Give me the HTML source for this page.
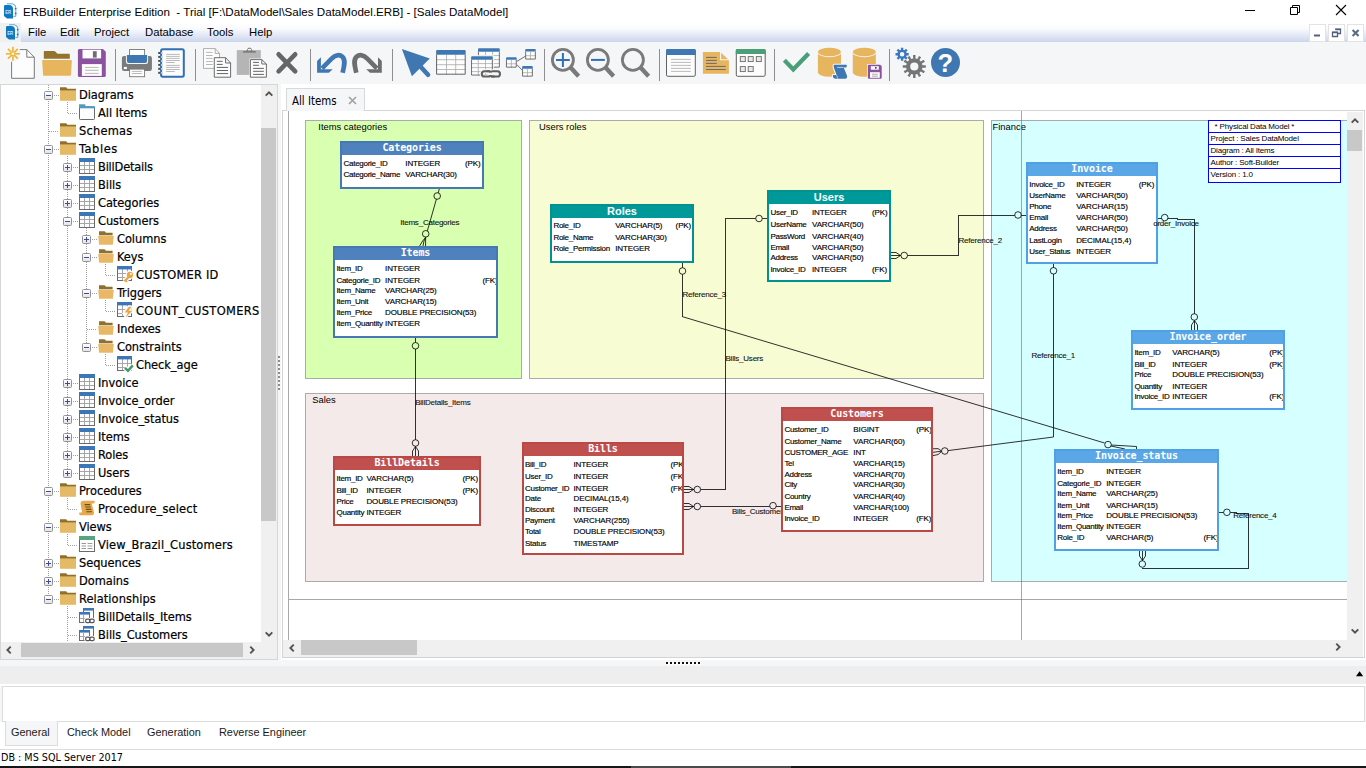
<!DOCTYPE html>
<html lang="en"><head><meta charset="utf-8"><title>ERBuilder Enterprise Edition</title>
<style>
*{box-sizing:border-box}
html,body{margin:0;padding:0}
body{width:1366px;height:768px;overflow:hidden;background:#f5f6f7;position:relative;font-family:"Liberation Sans", sans-serif;color:#000}
.abs{position:absolute}
.t{position:absolute;white-space:pre;line-height:1}
#titlebar{left:0;top:0;width:1366px;height:22px;background:#fff}
#menubar{left:0;top:22px;width:1366px;height:20px;background:linear-gradient(#ffffff 0%,#fbfcfe 30%,#e4e9f6 65%,#ccd5ec 100%)}
#toolbar{left:0;top:43px;width:1366px;height:41px;background:transparent}
.tsep{position:absolute;top:6px;width:1px;height:32px;background:#8e8e8e}
.ticon{position:absolute;top:5px;width:32px;height:32px}
#treepanel{left:0;top:84px;width:278px;height:576px;background:#f0f0f0;border:1px solid #d4d6d8;border-left:none}
#tree{left:0;top:0;width:261px;height:557px;background:#fff;overflow:hidden}
.tr{position:absolute;left:0;height:18px;width:400px}
.tl{position:absolute;top:2px;white-space:pre;font-family:"DejaVu Sans Condensed", "DejaVu Sans", "Liberation Sans", sans-serif;font-size:12.7px;line-height:14px;color:#000;letter-spacing:-0.05px;-webkit-text-stroke:0.2px #000}
.ti{position:absolute;top:0;width:16px;height:16px}
.ex{position:absolute;top:5px;width:9px;height:9px;border:1px solid #919191;border-radius:1.5px;background:linear-gradient(#fff,#e4e4e4)}
.ex i{position:absolute;left:1px;top:3px;width:5px;height:1px;background:#3d4b9c}
.ex b{position:absolute;left:3px;top:1px;width:1px;height:5px;background:#3d4b9c}
.sb{background:#f0f0f0}
.thumb{position:absolute;background:#c8c8c8}
#main{left:282px;top:110px;width:1083px;height:548px;border:1px solid #d4d4d4;background:#fff}
#canvas{left:283px;top:111px;width:1064px;height:529px;background:#fff;overflow:hidden}
#tab{left:286px;top:88px;width:79px;height:23px;background:#f5f6f7;border:1px solid #d9d9d9;border-bottom:none}
#bar{left:0;top:666px;width:1366px;height:18px;background:#eeeeee}
#out{left:2px;top:686px;width:1363px;height:36px;background:#fff;border:1px solid #dcdcdc}
#tabs{left:0;top:722px;width:1366px;height:27px;background:#fff}
#status{left:0;top:749px;width:1366px;height:17px;background:#fff;border-top:1px solid #dcdcdc}
#dark{left:0;top:766px;width:1366px;height:2px;background:#161616}
</style></head>
<body>
<div id="titlebar" class="abs"><div class="abs" style="left:3px;top:3px;width:16px;height:16px"><svg width="16" height="16" viewBox="0 0 16 16" style="overflow:visible;display:block"><path d="M4 0.8h5.5q3.3 0.6 3.3 4v8.5h-2.5" fill="#fff" stroke="#2b8fd0" stroke-width="0.8"/><path d="M1 3.2q0-1.3 1.3-1.3h4.6q3.1 0.6 3.1 4v9.6h-6l-3-2.6z" fill="#0f78c0"/><circle cx="12.6" cy="5.6" r="0.9" fill="#0f78c0"/><circle cx="12.6" cy="10.4" r="0.9" fill="#0f78c0"/><text x="2.2" y="10.6" font-family="Liberation Sans, sans-serif" font-size="4.6" font-weight="bold" fill="#cfe6f6" textLength="6" lengthAdjust="spacingAndGlyphs">ER</text></svg></div><span class="t" style="left:23px;top:5.5px;font-size:11.6px">ERBuilder Enterprise Edition  - Trial [F:\DataModel\Sales DataModel.ERB] - [Sales DataModel]</span><svg class="abs" style="left:1230px;top:0" width="136" height="22" viewBox="0 0 136 22"><path d="M15 10.5h10" stroke="#000" stroke-width="1" fill="none"/><path d="M60.5 7.5h7v7h-7z M62.5 7.5v-2h7v7h-2" stroke="#000" stroke-width="1" fill="none"/><path d="M106 5l10 10M116 5L106 15" stroke="#000" stroke-width="1.1" fill="none"/></svg></div>
<div id="menubar" class="abs"><div class="abs" style="left:0;top:1px;width:21px;height:19px;background:#f0f0f0"></div><div class="abs" style="left:5px;top:2px;width:16px;height:16px"><svg width="16" height="16" viewBox="0 0 16 16" style="overflow:visible;display:block"><path d="M4 0.8h5.5q3.3 0.6 3.3 4v8.5h-2.5" fill="#fff" stroke="#2b8fd0" stroke-width="0.8"/><path d="M1 3.2q0-1.3 1.3-1.3h4.6q3.1 0.6 3.1 4v9.6h-6l-3-2.6z" fill="#0f78c0"/><circle cx="12.6" cy="5.6" r="0.9" fill="#0f78c0"/><circle cx="12.6" cy="10.4" r="0.9" fill="#0f78c0"/><text x="2.2" y="10.6" font-family="Liberation Sans, sans-serif" font-size="4.6" font-weight="bold" fill="#cfe6f6" textLength="6" lengthAdjust="spacingAndGlyphs">ER</text></svg></div><span class="t" style="left:28px;top:5.4px;font-size:11.3px">File</span><span class="t" style="left:60px;top:5.4px;font-size:11.3px">Edit</span><span class="t" style="left:94px;top:5.4px;font-size:11.3px">Project</span><span class="t" style="left:145px;top:5.4px;font-size:11.3px">Database</span><span class="t" style="left:207px;top:5.4px;font-size:11.3px">Tools</span><span class="t" style="left:249px;top:5.4px;font-size:11.3px">Help</span><svg class="abs" style="left:1309px;top:2px" width="17" height="18" viewBox="0 0 17 18"><rect x="0.5" y="0.5" width="16" height="17" fill="#fff" stroke="#e3e3e3"/><path d="M5 11.5h6" stroke="#52607f" stroke-width="2" fill="none"/></svg><svg class="abs" style="left:1328px;top:2px" width="17" height="18" viewBox="0 0 17 18"><rect x="0.5" y="0.5" width="16" height="17" fill="#fff" stroke="#e3e3e3"/><path d="M7.5 5.5h5v4h-2.5M4.5 8.5h5v4h-5z" stroke="#52607f" stroke-width="1.3" fill="none"/><path d="M7 5.2h6M4 8.2h6" stroke="#52607f" stroke-width="1.2"/></svg><svg class="abs" style="left:1347px;top:2px" width="17" height="18" viewBox="0 0 17 18"><rect x="0.5" y="0.5" width="16" height="17" fill="#fff" stroke="#e3e3e3"/><path d="M5.6 6l6 6M11.6 6l-6 6" stroke="#5a6986" stroke-width="2" fill="none"/></svg></div>
<div id="toolbar" class="abs"><div class="tsep" style="left:115px"></div><div class="tsep" style="left:195px"></div><div class="tsep" style="left:310px"></div><div class="tsep" style="left:392px"></div><div class="tsep" style="left:544px"></div><div class="tsep" style="left:659px"></div><div class="tsep" style="left:774px"></div><div class="tsep" style="left:889px"></div><div class="ticon" style="left:5px"><svg width="32" height="32" viewBox="0 0 32 32" style="overflow:visible;display:block"><path d="M6.6 1.6H21.8L29.3 9.2V30.3H6.6z" fill="#fdfdfd" stroke="#6b6b70" stroke-width="0.9" stroke-linejoin="round"/><path d="M21.8 1.6V9.2H29.3" fill="none" stroke="#6b6b70" stroke-width="0.9" stroke-linejoin="round"/><circle cx="7.9" cy="5.8" r="8.3" fill="#f5f6f7"/><path d="M7.9 5.8L7.90 -1.20" stroke="#f0b53c" stroke-width="1.7" stroke-linecap="butt"/><path d="M7.9 5.8L7.90 12.80" stroke="#f0b53c" stroke-width="1.7" stroke-linecap="butt"/><path d="M7.9 5.8L0.90 5.80" stroke="#f0b53c" stroke-width="1.7" stroke-linecap="butt"/><path d="M7.9 5.8L14.90 5.80" stroke="#f0b53c" stroke-width="1.7" stroke-linecap="butt"/><path d="M7.9 5.8L3.00 0.90" stroke="#f0b53c" stroke-width="1.7" stroke-linecap="butt"/><path d="M7.9 5.8L12.80 10.70" stroke="#f0b53c" stroke-width="1.7" stroke-linecap="butt"/><path d="M7.9 5.8L12.80 0.90" stroke="#f0b53c" stroke-width="1.7" stroke-linecap="butt"/><path d="M7.9 5.8L3.00 10.70" stroke="#f0b53c" stroke-width="1.7" stroke-linecap="butt"/><circle cx="7.9" cy="5.8" r="1.3" fill="#f5f6f7"/></svg></div><div class="ticon" style="left:41px"><svg width="32" height="32" viewBox="0 0 32 32" style="overflow:visible;display:block"><path d="M2.8 3.6q0-0.7 0.7-0.7h9.4q0.6 0 1 0.4l2.6 2.5h11.6q0.7 0 0.7 0.7v4.3h-26z" fill="#94742c"/><path d="M1.8 12.1h28.4q0.7 0 0.65 0.7l-0.9 14.2q-0.05 0.7-0.75 0.7H2.8q-0.7 0-0.75-0.7l-0.9-14.2q-0.05-0.7 0.65-0.7z" fill="#e8b55f"/></svg></div><div class="ticon" style="left:77px"><svg width="32" height="32" viewBox="0 0 32 32" style="overflow:visible;display:block"><path d="M2.4 1h23.5l2.9 2.8v23.6q0 1.5-1.5 1.5H2.4q-1.5 0-1.5-1.5V2.5q0-1.5 1.5-1.5z" fill="#8b52a0"/><rect x="5.5" y="1.7" width="18.6" height="8.7" fill="#fdfdfd"/><rect x="15.9" y="3.2" width="3.8" height="6.4" fill="#6e6e72"/><rect x="4.9" y="16.1" width="19.9" height="11.8" fill="#fdfdfd"/><path d="M8 19.4h13.75M8 22.3h13.75M8 25.4h13.75" stroke="#a6a6a6" stroke-width="0.8"/></svg></div><div class="ticon" style="left:121px"><svg width="32" height="32" viewBox="0 0 32 32" style="overflow:visible;display:block"><rect x="8.6" y="1.5" width="15" height="7" fill="#fdfdfd" stroke="#777" stroke-width="0.9"/><rect x="0.9" y="7.9" width="30" height="15" rx="2.2" fill="#7a7a7a"/><path d="M4.9 7.9h22.2v5.8q0 2.2-2.2 2.2H7.1q-2.2 0-2.2-2.2z" fill="#f5f6f7"/><path d="M5.9 7.1h20.2v5.9q0 2-2 2H7.9q-2 0-2-2z" fill="#3f77b3"/><rect x="2.8" y="18.9" width="3.1" height="2.2" fill="#fdfdfd"/><rect x="8.6" y="21.1" width="15" height="7.6" fill="#fdfdfd" stroke="#777" stroke-width="0.9"/><path d="M10.9 23.4h10M10.9 25.5h10" stroke="#a6a6a6" stroke-width="0.8"/></svg></div><div class="ticon" style="left:157px"><svg width="32" height="32" viewBox="0 0 32 32" style="overflow:visible;display:block"><rect x="4.1" y="1.2" width="22.7" height="27.5" rx="1.6" fill="#fdfdfd" stroke="#2f6fb5" stroke-width="2"/><rect x="1.2" y="4.0" width="2.2" height="2" fill="#4d4d4d"/><circle cx="4.9" cy="5.0" r="1.1" fill="#cfcfcf"/><rect x="1.2" y="7.9" width="2.2" height="2" fill="#4d4d4d"/><circle cx="4.9" cy="8.9" r="1.1" fill="#cfcfcf"/><rect x="1.2" y="11.9" width="2.2" height="2" fill="#4d4d4d"/><circle cx="4.9" cy="12.9" r="1.1" fill="#cfcfcf"/><rect x="1.2" y="15.9" width="2.2" height="2" fill="#4d4d4d"/><circle cx="4.9" cy="16.9" r="1.1" fill="#cfcfcf"/><rect x="1.2" y="19.8" width="2.2" height="2" fill="#4d4d4d"/><circle cx="4.9" cy="20.8" r="1.1" fill="#cfcfcf"/><rect x="1.2" y="23.8" width="2.2" height="2" fill="#4d4d4d"/><circle cx="4.9" cy="24.8" r="1.1" fill="#cfcfcf"/><path d="M9.1 6.4h13.7M9.1 8.4h13.7M9.1 10.4h13.7M9.1 12.5h13.7M9.1 14.5h8.7M9.1 17.4h13.7M9.1 19.4h13.7M9.1 21.5h13.7M9.1 23.5h8.7" stroke="#a3a3a3" stroke-width="0.75"/></svg></div><div class="ticon" style="left:201px"><svg width="32" height="32" viewBox="0 0 32 32" style="overflow:visible;display:block"><path d="M2.5 0.6H14.2L18.5 5.4V20.4H2.5z" fill="#fdfdfd" stroke="#9a9a9a" stroke-width="0.8"/><path d="M14.2 0.6V5.4H18.5" fill="none" stroke="#9a9a9a" stroke-width="0.8"/><path d="M5 4.4h6.7M5 7.5h6.7M5 10.4h6.7M5 13.5h6.7M5 16.5h6.7" stroke="#a6a6a6" stroke-width="0.8"/><path d="M13.3 9.7H24.6L29.6 15V29.2H13.3z" fill="#fdfdfd" stroke="#5c5c5c" stroke-width="0.9"/><path d="M24.6 9.7V15H29.6" fill="none" stroke="#5c5c5c" stroke-width="0.9"/><path d="M15.8 13.3h5.9M15.8 16.4h5.9M15.8 19.4h11.3M15.8 22.5h11.3M15.8 25.6h11.3" stroke="#5c5c5c" stroke-width="0.95"/></svg></div><div class="ticon" style="left:237px"><svg width="32" height="32" viewBox="0 0 32 32" style="overflow:visible;display:block"><rect x="-0.2" y="2.1" width="24" height="24.8" fill="#b5b5b5"/><path d="M6.1 4.8V3.6q0-0.7 0.7-0.7h2.6l0.9-2q0.6-1.5 2.2-1.5t2.2 1.5l0.9 2h2.5q0.7 0 0.7 0.7v1.2z" fill="#7d7d7d"/><ellipse cx="12.5" cy="1.6" rx="1.9" ry="0.9" fill="#f5f6f7"/><path d="M12.4 10.6H25.3L30.4 15.6V30.2H12.4z" fill="#f5f6f7"/><path d="M13.4 11.6H24.8L29.4 16V29.2H13.4z" fill="#fdfdfd" stroke="#5c5c5c" stroke-width="0.9"/><path d="M24.8 11.6V16H29.4" fill="none" stroke="#5c5c5c" stroke-width="0.9"/><path d="M16.1 14.4h5.8M16.1 17.3h5.8M16.1 20.4h10.8M16.1 23.3h10.8M16.1 26.4h10.8" stroke="#5c5c5c" stroke-width="0.95"/></svg></div><div class="ticon" style="left:273px"><svg width="32" height="32" viewBox="0 0 32 32" style="overflow:visible;display:block"><path d="M5.6 6.3L22.2 23.3M22.2 6.3L5.6 23.3" stroke="#666" stroke-width="4.6" stroke-linecap="round" fill="none"/></svg></div><div class="ticon" style="left:317px"><svg width="32" height="32" viewBox="0 0 32 32" style="overflow:visible;display:block"><path d="M5 20.3L14.6 10.6C18.5 6.6 22.6 6.2 25.4 8.8C28.8 12 27.4 17.5 25.6 24.75" fill="none" stroke="#3f77b3" stroke-width="4.6"/><path d="M0.1 12.9L3.9 9.2V21.2H15.7L11.9 24.75H0.1z" fill="#3f77b3"/></svg></div><div class="ticon" style="left:353px"><svg width="32" height="32" viewBox="0 0 32 32" style="overflow:visible;display:block"><g transform="translate(28.9 0) scale(-1 1)"><path d="M5 20.3L14.6 10.6C18.5 6.6 22.6 6.2 25.4 8.8C28.8 12 27.4 17.5 25.6 24.75" fill="none" stroke="#6e6e6e" stroke-width="4.6"/><path d="M0.1 12.9L3.9 9.2V21.2H15.7L11.9 24.75H0.1z" fill="#6e6e6e"/></g></svg></div><div class="ticon" style="left:397px"><svg width="32" height="32" viewBox="0 0 32 32" style="overflow:visible;display:block"><path d="M4.9 1L32.8 10.4L14.9 28.3z" fill="#3f77b3"/><path d="M22.5 17.5L31 26.7" stroke="#3f77b3" stroke-width="4.6" stroke-linecap="round"/></svg></div><div class="ticon" style="left:433px"><svg width="32" height="32" viewBox="0 0 32 32" style="overflow:visible;display:block"><rect x="3.10" y="2.10" width="29.60" height="24.60" fill="#fdfdfd"/><path d="M13.50 6.80V26.70" stroke="#a9a9a9" stroke-width="0.8"/><path d="M22.70 6.80V26.70" stroke="#a9a9a9" stroke-width="0.8"/><path d="M3.10 11.70H32.70" stroke="#a9a9a9" stroke-width="0.8"/><path d="M3.10 16.70H32.70" stroke="#a9a9a9" stroke-width="0.8"/><path d="M3.10 21.50H32.70" stroke="#a9a9a9" stroke-width="0.8"/><path d="M3.60 6.80V26.20H32.20V6.80" fill="none" stroke="#606060" stroke-width="1.00"/><path d="M3.10 6.80v-3.70q0-1.00 1-1.00h27.60q1 0 1 1v3.70z" fill="#3f77b3"/></svg></div><div class="ticon" style="left:469px"><svg width="32" height="32" viewBox="0 0 32 32" style="overflow:visible;display:block"><rect x="9.00" y="0.20" width="21.80" height="19.40" fill="#fdfdfd"/><path d="M16.50 3.80V19.60" stroke="#a9a9a9" stroke-width="0.8"/><path d="M23.60 3.80V19.60" stroke="#a9a9a9" stroke-width="0.8"/><path d="M9.00 7.60H30.80" stroke="#a9a9a9" stroke-width="0.8"/><path d="M9.00 11.60H30.80" stroke="#a9a9a9" stroke-width="0.8"/><path d="M9.00 15.60H30.80" stroke="#a9a9a9" stroke-width="0.8"/><path d="M9.45 3.80V19.15H30.35V3.80" fill="none" stroke="#606060" stroke-width="0.90"/><path d="M9.00 3.80v-2.60q0-1.00 1-1.00h19.80q1 0 1 1v2.60z" fill="#3f77b3"/><rect x="1.10" y="7.20" width="23.70" height="21.30" fill="#f5f6f7"/><rect x="2.10" y="8.20" width="21.70" height="19.30" fill="#fdfdfd"/><path d="M9.30 11.80V27.50" stroke="#a9a9a9" stroke-width="0.8"/><path d="M16.50 11.80V27.50" stroke="#a9a9a9" stroke-width="0.8"/><path d="M2.10 15.60H23.80" stroke="#a9a9a9" stroke-width="0.8"/><path d="M2.10 19.60H23.80" stroke="#a9a9a9" stroke-width="0.8"/><path d="M2.10 23.60H23.80" stroke="#a9a9a9" stroke-width="0.8"/><path d="M2.55 11.80V27.05H23.35V11.80" fill="none" stroke="#606060" stroke-width="0.90"/><path d="M2.10 11.80v-2.60q0-1.00 1-1.00h19.70q1 0 1 1v2.60z" fill="#3f77b3"/><g fill="none" stroke="#f5f6f7" stroke-width="4"><rect x="12.8" y="23.2" width="9" height="5.3" rx="2.6"/><rect x="21.4" y="23.2" width="9.6" height="5.3" rx="2.6"/></g><g fill="none" stroke="#606060" stroke-width="2"><rect x="12.8" y="23.2" width="9" height="5.3" rx="2.6"/><rect x="21.4" y="23.2" width="9.6" height="5.3" rx="2.6"/></g><path d="M18.5 25.85h6.5" stroke="#f5f6f7" stroke-width="2.4"/><path d="M17.5 23.2h4M22 28.5h4" stroke="#606060" stroke-width="2" fill="none"/></svg></div><div class="ticon" style="left:505px"><svg width="32" height="32" viewBox="0 0 32 32" style="overflow:visible;display:block"><path d="M11.7 13.5L20.2 8.3M11.7 16.5L17.1 22" stroke="#606060" stroke-width="0.9"/><rect x="1.00" y="9.20" width="10.70" height="10.40" fill="#fdfdfd"/><path d="M6.35 11.80V19.60" stroke="#a9a9a9" stroke-width="0.8"/><path d="M1.00 15.80H11.70" stroke="#a9a9a9" stroke-width="0.8"/><path d="M1.45 11.80V19.15H11.25V11.80" fill="none" stroke="#606060" stroke-width="0.90"/><path d="M1.00 11.80v-1.60q0-1.00 1-1.00h8.70q1 0 1 1v1.60z" fill="#3f77b3"/><rect x="20.20" y="1.00" width="10.60" height="10.50" fill="#fdfdfd"/><path d="M25.50 3.60V11.50" stroke="#a9a9a9" stroke-width="0.8"/><path d="M20.20 7.70H30.80" stroke="#a9a9a9" stroke-width="0.8"/><path d="M20.65 3.60V11.05H30.35V3.60" fill="none" stroke="#606060" stroke-width="0.90"/><path d="M20.20 3.60v-1.60q0-1.00 1-1.00h8.60q1 0 1 1v1.60z" fill="#3f77b3"/><rect x="17.10" y="18.10" width="10.70" height="10.50" fill="#fdfdfd"/><path d="M22.45 20.70V28.60" stroke="#a9a9a9" stroke-width="0.8"/><path d="M17.10 24.70H27.80" stroke="#a9a9a9" stroke-width="0.8"/><path d="M17.55 20.70V28.15H27.35V20.70" fill="none" stroke="#606060" stroke-width="0.90"/><path d="M17.10 20.70v-1.60q0-1.00 1-1.00h8.70q1 0 1 1v1.60z" fill="#3f77b3"/></svg></div><div class="ticon" style="left:549px"><svg width="32" height="32" viewBox="0 0 32 32" style="overflow:visible;display:block"><circle cx="13.9" cy="11.9" r="10.5" fill="none" stroke="#7a7a7a" stroke-width="2.8"/><path d="M21.6 19.6L29.6 28.2" stroke="#7a7a7a" stroke-width="4.4"/><path d="M7 11.9h13.8M13.9 5v13.9" stroke="#2f6fb5" stroke-width="2"/></svg></div><div class="ticon" style="left:584px"><svg width="32" height="32" viewBox="0 0 32 32" style="overflow:visible;display:block"><circle cx="13.9" cy="11.9" r="10.5" fill="none" stroke="#7a7a7a" stroke-width="2.8"/><path d="M21.6 19.6L29.6 28.2" stroke="#7a7a7a" stroke-width="4.4"/><path d="M7 11.9h13.8" stroke="#2f6fb5" stroke-width="2"/></svg></div><div class="ticon" style="left:619px"><svg width="32" height="32" viewBox="0 0 32 32" style="overflow:visible;display:block"><circle cx="13.9" cy="11.9" r="10.5" fill="none" stroke="#7a7a7a" stroke-width="2.8"/><path d="M21.6 19.6L29.6 28.2" stroke="#7a7a7a" stroke-width="4.4"/></svg></div><div class="ticon" style="left:665px"><svg width="32" height="32" viewBox="0 0 32 32" style="overflow:visible;display:block"><rect x="1.5" y="1.5" width="28.8" height="26.8" rx="1.4" fill="#fdfdfd" stroke="#606060" stroke-width="1"/><path d="M1 6.9V2.4q0-1.4 1.4-1.4h27q1.4 0 1.4 1.4v4.5z" fill="#3f77b3"/><path d="M6 11.4h19.8M6 14.4h19.8M6 17.4h19.8M6 20.4h19.8M6 23.4h19.8" stroke="#a9a9a9" stroke-width="0.8"/></svg></div><div class="ticon" style="left:701px"><svg width="32" height="32" viewBox="0 0 32 32" style="overflow:visible;display:block"><path d="M1.9 3.9H19.2L27.9 12.1V25.8H1.9z" fill="#e8b55f"/><path d="M19.6 3.2V11.7H28.4" fill="none" stroke="#f5f6f7" stroke-width="1.1"/><path d="M5 9.4h10.8M5 12.4h10.8M5 15.4h10.8M5 18.4h19.8M5 21.5h19.8" stroke="#6a6a6a" stroke-width="1"/></svg></div><div class="ticon" style="left:737px"><svg width="32" height="32" viewBox="0 0 32 32" style="overflow:visible;display:block"><rect x="-0.7" y="1.5" width="28.9" height="26.8" rx="1.4" fill="#fdfdfd" stroke="#606060" stroke-width="1"/><path d="M-1.2 5.9V2.4q0-1.4 1.4-1.4h27.1q1.4 0 1.4 1.4v3.5z" fill="#4a9f78"/><rect x="3.3" y="8.6" width="5" height="5" fill="#e9e9e9" stroke="#6a6a6a" stroke-width="0.9"/><rect x="11.2" y="8.6" width="5" height="5" fill="#e9e9e9" stroke="#6a6a6a" stroke-width="0.9"/><rect x="19.3" y="8.6" width="5" height="5" fill="#e9e9e9" stroke="#6a6a6a" stroke-width="0.9"/><rect x="3.3" y="18.6" width="5" height="5" fill="#e9e9e9" stroke="#6a6a6a" stroke-width="0.9"/><rect x="11.2" y="18.6" width="5" height="5" fill="#e9e9e9" stroke="#6a6a6a" stroke-width="0.9"/></svg></div><div class="ticon" style="left:781px"><svg width="32" height="32" viewBox="0 0 32 32" style="overflow:visible;display:block"><path d="M3.4 12.3L12.3 21.5L27.6 5.6" fill="none" stroke="#4a9f78" stroke-width="4.3"/></svg></div><div class="ticon" style="left:817px"><svg width="32" height="32" viewBox="0 0 32 32" style="overflow:visible;display:block"><path d="M0.90 4V24.6a11.55 4.2 0 0 0 23.1 0V4z" fill="#e8b55f"/><ellipse cx="12.45" cy="4.6" rx="11.9" ry="4.6" fill="#f5f6f7"/><ellipse cx="12.45" cy="4" rx="11.55" ry="4.2" fill="#e8b55f"/><path d="M17.3 16.8H29Q30.3 16.9 29.8 18L29.3 19.4H26.7L30 27.8Q30.6 30.6 28 30.8H18.8Q16 30.6 15.9 28L16.1 27.1H19.6L17 20Q16.2 17 17.3 16.8Z" fill="#f5f6f7" stroke="#f5f6f7" stroke-width="2.2" stroke-linejoin="round"/><path d="M17.3 16.8H29Q30.3 16.9 29.8 18L29.3 19.4H26.7L30 27.8Q30.6 30.6 28 30.8H18.8Q16 30.6 15.9 28L16.1 27.1H19.6L17 20Q16.2 17 17.3 16.8Z" fill="#3f77b3"/><path d="M20.2 19.4H26.7" stroke="#f5f6f7" stroke-width="0.7"/><path d="M19.6 27.1L20.8 30.6" stroke="#f5f6f7" stroke-width="0.6"/></svg></div><div class="ticon" style="left:853px"><svg width="32" height="32" viewBox="0 0 32 32" style="overflow:visible;display:block"><path d="M-0.25 4V24.6a11.55 4.2 0 0 0 23.1 0V4z" fill="#e8b55f"/><ellipse cx="11.30" cy="4.6" rx="11.9" ry="4.6" fill="#f5f6f7"/><ellipse cx="11.30" cy="4" rx="11.55" ry="4.2" fill="#e8b55f"/><rect x="14.1" y="16" width="15.4" height="15.6" fill="#f5f6f7"/><path d="M15.9 16.8h11.3l1.5 1.5v11.5q0 1-1 1H15.9q-1 0-1-1V17.8q0-1 1-1z" fill="#8b52a0"/><rect x="17.8" y="18.2" width="8" height="3.5" fill="#fdfdfd"/><rect x="22" y="19" width="1.6" height="1.7" fill="#444"/><rect x="17" y="24.2" width="9.8" height="5.6" fill="#fdfdfd"/><path d="M19 26.25h5.8M19 28.2h5.8" stroke="#8a8a8a" stroke-width="0.7"/></svg></div><div class="ticon" style="left:897px"><svg width="32" height="32" viewBox="0 0 32 32" style="overflow:visible;display:block"><path d="M25.42 17.32L28.83 17.25L28.83 19.75L25.42 19.68L24.92 21.54L27.91 23.18L26.66 25.35L23.74 23.58L22.38 24.94L24.15 27.86L21.98 29.11L20.34 26.12L18.48 26.62L18.55 30.03L16.05 30.03L16.12 26.62L14.26 26.12L12.62 29.11L10.45 27.86L12.22 24.94L10.86 23.58L7.94 25.35L6.69 23.18L9.68 21.54L9.18 19.68L5.77 19.75L5.77 17.25L9.18 17.32L9.68 15.46L6.69 13.82L7.94 11.65L10.86 13.42L12.22 12.06L10.45 9.14L12.62 7.89L14.26 10.88L16.12 10.38L16.05 6.97L18.55 6.97L18.48 10.38L20.34 10.88L21.98 7.89L24.15 9.14L22.38 12.06L23.74 13.42L26.66 11.65L27.91 13.82L24.92 15.46zM13.20 18.50a4.10 4.10 0 1 0 8.20 0a4.10 4.10 0 1 0 -8.20 0z" fill="#757575" fill-rule="evenodd"/><path d="M9.66 5.12L11.69 5.03L11.69 7.47L9.66 7.38L9.13 8.67L10.62 10.05L8.90 11.77L7.52 10.28L6.23 10.81L6.32 12.84L3.88 12.84L3.97 10.81L2.68 10.28L1.30 11.77L-0.42 10.05L1.07 8.67L0.54 7.38L-1.49 7.47L-1.49 5.03L0.54 5.12L1.07 3.83L-0.42 2.45L1.30 0.73L2.68 2.22L3.97 1.69L3.88 -0.34L6.32 -0.34L6.23 1.69L7.52 2.22L8.90 0.73L10.62 2.45L9.13 3.83zM2.80 6.25a2.30 2.30 0 1 0 4.60 0a2.30 2.30 0 1 0 -4.60 0z" fill="#3b78bd" fill-rule="evenodd"/></svg></div><div class="ticon" style="left:933px"><svg width="32" height="32" viewBox="0 0 32 32" style="overflow:visible;display:block"><circle cx="12.5" cy="14.4" r="14.5" fill="#3f77b3"/><text x="12.4" y="24" text-anchor="middle" font-family="Liberation Sans, sans-serif" font-weight="bold" font-size="25.5" fill="#fff">?</text></svg></div></div>
<div id="treepanel" class="abs"><div id="tree" class="abs"><svg class="abs" style="left:0;top:0" width="261" height="557" viewBox="0 0 261 557" shape-rendering="crispEdges"><path d="M54 10.5 H59" stroke="#a0a0a0" stroke-width="1" stroke-dasharray="1 1" fill="none"/><path d="M68 28.5 H78" stroke="#a0a0a0" stroke-width="1" stroke-dasharray="1 1" fill="none"/><path d="M49 46.5 H59" stroke="#a0a0a0" stroke-width="1" stroke-dasharray="1 1" fill="none"/><path d="M54 64.5 H59" stroke="#a0a0a0" stroke-width="1" stroke-dasharray="1 1" fill="none"/><path d="M73 82.5 H78" stroke="#a0a0a0" stroke-width="1" stroke-dasharray="1 1" fill="none"/><path d="M73 100.5 H78" stroke="#a0a0a0" stroke-width="1" stroke-dasharray="1 1" fill="none"/><path d="M73 118.5 H78" stroke="#a0a0a0" stroke-width="1" stroke-dasharray="1 1" fill="none"/><path d="M73 136.5 H78" stroke="#a0a0a0" stroke-width="1" stroke-dasharray="1 1" fill="none"/><path d="M92 154.5 H97" stroke="#a0a0a0" stroke-width="1" stroke-dasharray="1 1" fill="none"/><path d="M92 172.5 H97" stroke="#a0a0a0" stroke-width="1" stroke-dasharray="1 1" fill="none"/><path d="M106 190.5 H116" stroke="#a0a0a0" stroke-width="1" stroke-dasharray="1 1" fill="none"/><path d="M92 208.5 H97" stroke="#a0a0a0" stroke-width="1" stroke-dasharray="1 1" fill="none"/><path d="M106 226.5 H116" stroke="#a0a0a0" stroke-width="1" stroke-dasharray="1 1" fill="none"/><path d="M87 244.5 H97" stroke="#a0a0a0" stroke-width="1" stroke-dasharray="1 1" fill="none"/><path d="M92 262.5 H97" stroke="#a0a0a0" stroke-width="1" stroke-dasharray="1 1" fill="none"/><path d="M106 280.5 H116" stroke="#a0a0a0" stroke-width="1" stroke-dasharray="1 1" fill="none"/><path d="M73 298.5 H78" stroke="#a0a0a0" stroke-width="1" stroke-dasharray="1 1" fill="none"/><path d="M73 316.5 H78" stroke="#a0a0a0" stroke-width="1" stroke-dasharray="1 1" fill="none"/><path d="M73 334.5 H78" stroke="#a0a0a0" stroke-width="1" stroke-dasharray="1 1" fill="none"/><path d="M73 352.5 H78" stroke="#a0a0a0" stroke-width="1" stroke-dasharray="1 1" fill="none"/><path d="M73 370.5 H78" stroke="#a0a0a0" stroke-width="1" stroke-dasharray="1 1" fill="none"/><path d="M73 388.5 H78" stroke="#a0a0a0" stroke-width="1" stroke-dasharray="1 1" fill="none"/><path d="M54 406.5 H59" stroke="#a0a0a0" stroke-width="1" stroke-dasharray="1 1" fill="none"/><path d="M68 424.5 H78" stroke="#a0a0a0" stroke-width="1" stroke-dasharray="1 1" fill="none"/><path d="M54 442.5 H59" stroke="#a0a0a0" stroke-width="1" stroke-dasharray="1 1" fill="none"/><path d="M68 460.5 H78" stroke="#a0a0a0" stroke-width="1" stroke-dasharray="1 1" fill="none"/><path d="M54 478.5 H59" stroke="#a0a0a0" stroke-width="1" stroke-dasharray="1 1" fill="none"/><path d="M54 496.5 H59" stroke="#a0a0a0" stroke-width="1" stroke-dasharray="1 1" fill="none"/><path d="M54 514.5 H59" stroke="#a0a0a0" stroke-width="1" stroke-dasharray="1 1" fill="none"/><path d="M68 532.5 H78" stroke="#a0a0a0" stroke-width="1" stroke-dasharray="1 1" fill="none"/><path d="M68 550.5 H78" stroke="#a0a0a0" stroke-width="1" stroke-dasharray="1 1" fill="none"/><path d="M68 568.5 H78" stroke="#a0a0a0" stroke-width="1" stroke-dasharray="1 1" fill="none"/><path d="M48.5 0 V510" stroke="#a0a0a0" stroke-width="1" stroke-dasharray="1 1" fill="none"/><path d="M67.5 17 V28" stroke="#a0a0a0" stroke-width="1" stroke-dasharray="1 1" fill="none"/><path d="M67.5 71 V388" stroke="#a0a0a0" stroke-width="1" stroke-dasharray="1 1" fill="none"/><path d="M86.5 143 V262" stroke="#a0a0a0" stroke-width="1" stroke-dasharray="1 1" fill="none"/><path d="M105.5 179 V190" stroke="#a0a0a0" stroke-width="1" stroke-dasharray="1 1" fill="none"/><path d="M105.5 215 V226" stroke="#a0a0a0" stroke-width="1" stroke-dasharray="1 1" fill="none"/><path d="M105.5 269 V280" stroke="#a0a0a0" stroke-width="1" stroke-dasharray="1 1" fill="none"/><path d="M67.5 413 V424" stroke="#a0a0a0" stroke-width="1" stroke-dasharray="1 1" fill="none"/><path d="M67.5 449 V460" stroke="#a0a0a0" stroke-width="1" stroke-dasharray="1 1" fill="none"/><path d="M67.5 521 V557" stroke="#a0a0a0" stroke-width="1" stroke-dasharray="1 1" fill="none"/></svg><div class="tr" style="top:1px"><span class="ex" style="left:44px"><i></i></span><span class="ti" style="left:60px"><svg width="16" height="16" viewBox="0 0 16 16" style="overflow:visible;display:block"><path d="M0 1.2h6.2l1.2 1.5h8.6v2.3h-16z" fill="#8f702c"/><rect x="0" y="4.4" width="16" height="10.4" fill="#e4ba66"/></svg></span><span class="tl" style="left:79px">Diagrams</span></div><div class="tr" style="top:19px"><span class="ti" style="left:79px"><svg width="16" height="16" viewBox="0 0 16 16" style="overflow:visible;display:block"><path d="M0 0.3h6.3v2.3h-6.3z" fill="#4a9cc4"/><rect x="0.5" y="2.8" width="15" height="12.7" rx="0.8" fill="#fdfdfd" stroke="#6b6b6b" stroke-width="1"/><path d="M0 2.3h16v2h-16z" fill="#4a9cc4"/></svg></span><span class="tl" style="left:98px">All Items</span></div><div class="tr" style="top:37px"><span class="ti" style="left:60px"><svg width="16" height="16" viewBox="0 0 16 16" style="overflow:visible;display:block"><path d="M0 1.2h6.2l1.2 1.5h8.6v2.3h-16z" fill="#8f702c"/><rect x="0" y="4.4" width="16" height="10.4" fill="#e4ba66"/></svg></span><span class="tl" style="left:79px;letter-spacing:0.22px">Schemas</span></div><div class="tr" style="top:55px"><span class="ex" style="left:44px"><i></i></span><span class="ti" style="left:60px"><svg width="16" height="16" viewBox="0 0 16 16" style="overflow:visible;display:block"><path d="M0 1.2h6.2l1.2 1.5h8.6v2.3h-16z" fill="#8f702c"/><rect x="0" y="4.4" width="16" height="10.4" fill="#e4ba66"/></svg></span><span class="tl" style="left:79px;letter-spacing:0.60px">Tables</span></div><div class="tr" style="top:73px"><span class="ex" style="left:63px"><i></i><b></b></span><span class="ti" style="left:79px"><svg width="16" height="16" viewBox="0 0 16 16" style="overflow:visible;display:block"><rect x="0.5" y="3.5" width="15" height="12" fill="#fdfdfd" stroke="#6b6b6b" stroke-width="1"/><path d="M5.5 4v11M10.5 4v11M1 7.5h14M1 11.5h14" stroke="#a6a6a6" stroke-width="1"/><rect x="0" y="0" width="16" height="4" fill="#3b76b8"/></svg></span><span class="tl" style="left:98px;letter-spacing:-0.20px">BillDetails</span></div><div class="tr" style="top:91px"><span class="ex" style="left:63px"><i></i><b></b></span><span class="ti" style="left:79px"><svg width="16" height="16" viewBox="0 0 16 16" style="overflow:visible;display:block"><rect x="0.5" y="3.5" width="15" height="12" fill="#fdfdfd" stroke="#6b6b6b" stroke-width="1"/><path d="M5.5 4v11M10.5 4v11M1 7.5h14M1 11.5h14" stroke="#a6a6a6" stroke-width="1"/><rect x="0" y="0" width="16" height="4" fill="#3b76b8"/></svg></span><span class="tl" style="left:98px">Bills</span></div><div class="tr" style="top:109px"><span class="ex" style="left:63px"><i></i><b></b></span><span class="ti" style="left:79px"><svg width="16" height="16" viewBox="0 0 16 16" style="overflow:visible;display:block"><rect x="0.5" y="3.5" width="15" height="12" fill="#fdfdfd" stroke="#6b6b6b" stroke-width="1"/><path d="M5.5 4v11M10.5 4v11M1 7.5h14M1 11.5h14" stroke="#a6a6a6" stroke-width="1"/><rect x="0" y="0" width="16" height="4" fill="#3b76b8"/></svg></span><span class="tl" style="left:98px">Categories</span></div><div class="tr" style="top:127px"><span class="ex" style="left:63px"><i></i></span><span class="ti" style="left:79px"><svg width="16" height="16" viewBox="0 0 16 16" style="overflow:visible;display:block"><rect x="0.5" y="3.5" width="15" height="12" fill="#fdfdfd" stroke="#6b6b6b" stroke-width="1"/><path d="M5.5 4v11M10.5 4v11M1 7.5h14M1 11.5h14" stroke="#a6a6a6" stroke-width="1"/><rect x="0" y="0" width="16" height="4" fill="#3b76b8"/></svg></span><span class="tl" style="left:98px">Customers</span></div><div class="tr" style="top:145px"><span class="ex" style="left:82px"><i></i><b></b></span><span class="ti" style="left:98px"><svg width="16" height="16" viewBox="0 0 16 16" style="overflow:visible;display:block"><path d="M1 1.3h5.6l1.4 1.5h6.6v3h-13.6z" fill="#8f702c"/><path d="M0 5.4h16v0.8h-16z" fill="#fdf6e8"/><path d="M0.2 6h15.6l-0.9 8.7h-13.8z" fill="#e8b866"/></svg></span><span class="tl" style="left:117px">Columns</span></div><div class="tr" style="top:163px"><span class="ex" style="left:82px"><i></i></span><span class="ti" style="left:98px"><svg width="16" height="16" viewBox="0 0 16 16" style="overflow:visible;display:block"><path d="M1 1.3h5.6l1.4 1.5h6.6v3h-13.6z" fill="#8f702c"/><path d="M0 5.4h16v0.8h-16z" fill="#fdf6e8"/><path d="M0.2 6h15.6l-0.9 8.7h-13.8z" fill="#e8b866"/></svg></span><span class="tl" style="left:117px">Keys</span></div><div class="tr" style="top:181px"><span class="ti" style="left:117px"><svg width="16" height="16" viewBox="0 0 16 16" style="overflow:visible;display:block"><rect x="0.5" y="2.5" width="14" height="12" fill="#fdfdfd" stroke="#6b6b6b" stroke-width="1"/><path d="M5.5 3v11M10.5 3v11M1 7.5h13M1 11.5h13" stroke="#a6a6a6" stroke-width="1"/><rect x="0" y="0" width="15" height="3.4" fill="#3b76b8"/><path d="M7.4 15.6L12.2 10.4" stroke="#fdfdfd" stroke-width="4.6"/><circle cx="13" cy="8.8" r="4.3" fill="#fdfdfd"/><path d="M7.6 15.4L11.8 10.8" stroke="#e9a646" stroke-width="2.3"/><path d="M8.5 14.5l1.6 1.4" stroke="#e9a646" stroke-width="1.4"/><circle cx="12.9" cy="8.9" r="3.1" fill="#e9a646"/><circle cx="13.8" cy="7.9" r="0.95" fill="#fdfdfd"/></svg></span><span class="tl" style="left:136px;letter-spacing:0.20px">CUSTOMER ID</span></div><div class="tr" style="top:199px"><span class="ex" style="left:82px"><i></i></span><span class="ti" style="left:98px"><svg width="16" height="16" viewBox="0 0 16 16" style="overflow:visible;display:block"><path d="M1 1.3h5.6l1.4 1.5h6.6v3h-13.6z" fill="#8f702c"/><path d="M0 5.4h16v0.8h-16z" fill="#fdf6e8"/><path d="M0.2 6h15.6l-0.9 8.7h-13.8z" fill="#e8b866"/></svg></span><span class="tl" style="left:117px">Triggers</span></div><div class="tr" style="top:217px"><span class="ti" style="left:117px"><svg width="16" height="16" viewBox="0 0 16 16" style="overflow:visible;display:block"><rect x="0.5" y="2.5" width="14" height="12" fill="#fdfdfd" stroke="#6b6b6b" stroke-width="1"/><path d="M5.5 3v11M10.5 3v11M1 7.5h13M1 11.5h13" stroke="#a6a6a6" stroke-width="1"/><rect x="0" y="0" width="15" height="3.4" fill="#3b76b8"/><path d="M11.6 4.4L6.8 11h3.2L7.2 16.6L16 8.6h-3.6L15 4.4z" fill="#fdfdfd" stroke="#fdfdfd" stroke-width="2"/><path d="M11.8 4.8L7.6 10.4h3.4L8.2 15.8L15.4 8.8h-3.8L14.6 4.8z" fill="#e9a646"/></svg></span><span class="tl" style="left:136px;letter-spacing:0.36px">COUNT_CUSTOMERS</span></div><div class="tr" style="top:235px"><span class="ti" style="left:98px"><svg width="16" height="16" viewBox="0 0 16 16" style="overflow:visible;display:block"><path d="M1 1.3h5.6l1.4 1.5h6.6v3h-13.6z" fill="#8f702c"/><path d="M0 5.4h16v0.8h-16z" fill="#fdf6e8"/><path d="M0.2 6h15.6l-0.9 8.7h-13.8z" fill="#e8b866"/></svg></span><span class="tl" style="left:117px">Indexes</span></div><div class="tr" style="top:253px"><span class="ex" style="left:82px"><i></i></span><span class="ti" style="left:98px"><svg width="16" height="16" viewBox="0 0 16 16" style="overflow:visible;display:block"><path d="M1 1.3h5.6l1.4 1.5h6.6v3h-13.6z" fill="#8f702c"/><path d="M0 5.4h16v0.8h-16z" fill="#fdf6e8"/><path d="M0.2 6h15.6l-0.9 8.7h-13.8z" fill="#e8b866"/></svg></span><span class="tl" style="left:117px">Constraints</span></div><div class="tr" style="top:271px"><span class="ti" style="left:117px"><svg width="16" height="16" viewBox="0 0 16 16" style="overflow:visible;display:block"><rect x="0.5" y="2.5" width="14" height="12" fill="#fdfdfd" stroke="#6b6b6b" stroke-width="1"/><path d="M5.5 3v11M10.5 3v11M1 7.5h13M1 11.5h13" stroke="#a6a6a6" stroke-width="1"/><rect x="0" y="0" width="15" height="3.4" fill="#3b76b8"/><path d="M7.8 11.6L11 14.8L15.8 9.2" fill="none" stroke="#fdfdfd" stroke-width="5"/><path d="M8 11.8L11 14.8L15.8 9.4" fill="none" stroke="#3f9a6e" stroke-width="2.4"/></svg></span><span class="tl" style="left:136px">Check_age</span></div><div class="tr" style="top:289px"><span class="ex" style="left:63px"><i></i><b></b></span><span class="ti" style="left:79px"><svg width="16" height="16" viewBox="0 0 16 16" style="overflow:visible;display:block"><rect x="0.5" y="3.5" width="15" height="12" fill="#fdfdfd" stroke="#6b6b6b" stroke-width="1"/><path d="M5.5 4v11M10.5 4v11M1 7.5h14M1 11.5h14" stroke="#a6a6a6" stroke-width="1"/><rect x="0" y="0" width="16" height="4" fill="#3b76b8"/></svg></span><span class="tl" style="left:98px">Invoice</span></div><div class="tr" style="top:307px"><span class="ex" style="left:63px"><i></i><b></b></span><span class="ti" style="left:79px"><svg width="16" height="16" viewBox="0 0 16 16" style="overflow:visible;display:block"><rect x="0.5" y="3.5" width="15" height="12" fill="#fdfdfd" stroke="#6b6b6b" stroke-width="1"/><path d="M5.5 4v11M10.5 4v11M1 7.5h14M1 11.5h14" stroke="#a6a6a6" stroke-width="1"/><rect x="0" y="0" width="16" height="4" fill="#3b76b8"/></svg></span><span class="tl" style="left:98px">Invoice_order</span></div><div class="tr" style="top:325px"><span class="ex" style="left:63px"><i></i><b></b></span><span class="ti" style="left:79px"><svg width="16" height="16" viewBox="0 0 16 16" style="overflow:visible;display:block"><rect x="0.5" y="3.5" width="15" height="12" fill="#fdfdfd" stroke="#6b6b6b" stroke-width="1"/><path d="M5.5 4v11M10.5 4v11M1 7.5h14M1 11.5h14" stroke="#a6a6a6" stroke-width="1"/><rect x="0" y="0" width="16" height="4" fill="#3b76b8"/></svg></span><span class="tl" style="left:98px">Invoice_status</span></div><div class="tr" style="top:343px"><span class="ex" style="left:63px"><i></i><b></b></span><span class="ti" style="left:79px"><svg width="16" height="16" viewBox="0 0 16 16" style="overflow:visible;display:block"><rect x="0.5" y="3.5" width="15" height="12" fill="#fdfdfd" stroke="#6b6b6b" stroke-width="1"/><path d="M5.5 4v11M10.5 4v11M1 7.5h14M1 11.5h14" stroke="#a6a6a6" stroke-width="1"/><rect x="0" y="0" width="16" height="4" fill="#3b76b8"/></svg></span><span class="tl" style="left:98px">Items</span></div><div class="tr" style="top:361px"><span class="ex" style="left:63px"><i></i><b></b></span><span class="ti" style="left:79px"><svg width="16" height="16" viewBox="0 0 16 16" style="overflow:visible;display:block"><rect x="0.5" y="3.5" width="15" height="12" fill="#fdfdfd" stroke="#6b6b6b" stroke-width="1"/><path d="M5.5 4v11M10.5 4v11M1 7.5h14M1 11.5h14" stroke="#a6a6a6" stroke-width="1"/><rect x="0" y="0" width="16" height="4" fill="#3b76b8"/></svg></span><span class="tl" style="left:98px">Roles</span></div><div class="tr" style="top:379px"><span class="ex" style="left:63px"><i></i><b></b></span><span class="ti" style="left:79px"><svg width="16" height="16" viewBox="0 0 16 16" style="overflow:visible;display:block"><rect x="0.5" y="3.5" width="15" height="12" fill="#fdfdfd" stroke="#6b6b6b" stroke-width="1"/><path d="M5.5 4v11M10.5 4v11M1 7.5h14M1 11.5h14" stroke="#a6a6a6" stroke-width="1"/><rect x="0" y="0" width="16" height="4" fill="#3b76b8"/></svg></span><span class="tl" style="left:98px">Users</span></div><div class="tr" style="top:397px"><span class="ex" style="left:44px"><i></i></span><span class="ti" style="left:60px"><svg width="16" height="16" viewBox="0 0 16 16" style="overflow:visible;display:block"><path d="M0 1.2h6.2l1.2 1.5h8.6v2.3h-16z" fill="#8f702c"/><rect x="0" y="4.4" width="16" height="10.4" fill="#e4ba66"/></svg></span><span class="tl" style="left:79px">Procedures</span></div><div class="tr" style="top:415px"><span class="ti" style="left:79px"><svg width="16" height="16" viewBox="0 0 16 16" style="overflow:visible;display:block"><path d="M4.2 0.8h10.6q1.2 0.2 0.9 1.3l-0.5 1.5h-2.6l2.4 8.6q0.5 2.4-1.6 3H1.4q-1.5-0.3-1.2-1.9l0.3-0.8h2.6L1.6 3.8q-0.5-2.6 2.6-3z" fill="#e6a94c"/><path d="M5.6 4.6h5.6M6.2 7h5.6M6.8 9.4h5.6M7.4 11.8h5.6" stroke="#6b4e16" stroke-width="1.1"/></svg></span><span class="tl" style="left:98px;letter-spacing:0.15px">Procedure_select</span></div><div class="tr" style="top:433px"><span class="ex" style="left:44px"><i></i></span><span class="ti" style="left:60px"><svg width="16" height="16" viewBox="0 0 16 16" style="overflow:visible;display:block"><path d="M0 1.2h6.2l1.2 1.5h8.6v2.3h-16z" fill="#8f702c"/><rect x="0" y="4.4" width="16" height="10.4" fill="#e4ba66"/></svg></span><span class="tl" style="left:79px">Views</span></div><div class="tr" style="top:451px"><span class="ti" style="left:79px"><svg width="16" height="16" viewBox="0 0 16 16" style="overflow:visible;display:block"><rect x="0.5" y="2.5" width="15" height="13" fill="#fdfdfd" stroke="#6b6b6b" stroke-width="1"/><rect x="0" y="0" width="16" height="4" fill="#5aa37f"/><path d="M2.6 7.5h4.4M8.6 7.5h4.8M2.6 10h4.4M8.6 10h4.8M2.6 12.5h4.4M8.6 12.5h4.8" stroke="#9a9a9a" stroke-width="1"/></svg></span><span class="tl" style="left:98px;letter-spacing:0.15px">View_Brazil_Customers</span></div><div class="tr" style="top:469px"><span class="ex" style="left:44px"><i></i><b></b></span><span class="ti" style="left:60px"><svg width="16" height="16" viewBox="0 0 16 16" style="overflow:visible;display:block"><path d="M0 1.2h6.2l1.2 1.5h8.6v2.3h-16z" fill="#8f702c"/><rect x="0" y="4.4" width="16" height="10.4" fill="#e4ba66"/></svg></span><span class="tl" style="left:79px">Sequences</span></div><div class="tr" style="top:487px"><span class="ex" style="left:44px"><i></i><b></b></span><span class="ti" style="left:60px"><svg width="16" height="16" viewBox="0 0 16 16" style="overflow:visible;display:block"><path d="M0 1.2h6.2l1.2 1.5h8.6v2.3h-16z" fill="#8f702c"/><rect x="0" y="4.4" width="16" height="10.4" fill="#e4ba66"/></svg></span><span class="tl" style="left:79px">Domains</span></div><div class="tr" style="top:505px"><span class="ex" style="left:44px"><i></i></span><span class="ti" style="left:60px"><svg width="16" height="16" viewBox="0 0 16 16" style="overflow:visible;display:block"><path d="M0 1.2h6.2l1.2 1.5h8.6v2.3h-16z" fill="#8f702c"/><rect x="0" y="4.4" width="16" height="10.4" fill="#e4ba66"/></svg></span><span class="tl" style="left:79px;letter-spacing:0.07px">Relationships</span></div><div class="tr" style="top:523px"><span class="ti" style="left:79px"><svg width="16" height="16" viewBox="0 0 16 16" style="overflow:visible;display:block"><rect x="4.5" y="1.5" width="10" height="9" fill="#fdfdfd" stroke="#6b6b6b" stroke-width="1"/><rect x="4" y="0" width="11" height="2.6" fill="#3b76b8"/><rect x="0.5" y="5.5" width="10" height="9" fill="#fdfdfd" stroke="#6b6b6b" stroke-width="1"/><path d="M4.5 7v7M1 10.5h9" stroke="#a6a6a6" stroke-width="1"/><rect x="0" y="4" width="11" height="2.6" fill="#3b76b8"/><g fill="#fdfdfd" stroke="#fdfdfd" stroke-width="3"><rect x="6.6" y="11.2" width="4.4" height="3.4" rx="1.6"/><rect x="10.6" y="11.2" width="4.6" height="3.4" rx="1.6"/></g><g fill="none" stroke="#555" stroke-width="1.2"><rect x="6.6" y="11.2" width="4.4" height="3.4" rx="1.6"/><rect x="10.6" y="11.2" width="4.6" height="3.4" rx="1.6"/></g></svg></span><span class="tl" style="left:98px">BillDetails_Items</span></div><div class="tr" style="top:541px"><span class="ti" style="left:79px"><svg width="16" height="16" viewBox="0 0 16 16" style="overflow:visible;display:block"><rect x="4.5" y="1.5" width="10" height="9" fill="#fdfdfd" stroke="#6b6b6b" stroke-width="1"/><rect x="4" y="0" width="11" height="2.6" fill="#3b76b8"/><rect x="0.5" y="5.5" width="10" height="9" fill="#fdfdfd" stroke="#6b6b6b" stroke-width="1"/><path d="M4.5 7v7M1 10.5h9" stroke="#a6a6a6" stroke-width="1"/><rect x="0" y="4" width="11" height="2.6" fill="#3b76b8"/><g fill="#fdfdfd" stroke="#fdfdfd" stroke-width="3"><rect x="6.6" y="11.2" width="4.4" height="3.4" rx="1.6"/><rect x="10.6" y="11.2" width="4.6" height="3.4" rx="1.6"/></g><g fill="none" stroke="#555" stroke-width="1.2"><rect x="6.6" y="11.2" width="4.4" height="3.4" rx="1.6"/><rect x="10.6" y="11.2" width="4.6" height="3.4" rx="1.6"/></g></svg></span><span class="tl" style="left:98px">Bills_Customers</span></div><div class="tr" style="top:559px"><span class="ti" style="left:79px"><svg width="16" height="16" viewBox="0 0 16 16" style="overflow:visible;display:block"><rect x="4.5" y="1.5" width="10" height="9" fill="#fdfdfd" stroke="#6b6b6b" stroke-width="1"/><rect x="4" y="0" width="11" height="2.6" fill="#3b76b8"/><rect x="0.5" y="5.5" width="10" height="9" fill="#fdfdfd" stroke="#6b6b6b" stroke-width="1"/><path d="M4.5 7v7M1 10.5h9" stroke="#a6a6a6" stroke-width="1"/><rect x="0" y="4" width="11" height="2.6" fill="#3b76b8"/><g fill="#fdfdfd" stroke="#fdfdfd" stroke-width="3"><rect x="6.6" y="11.2" width="4.4" height="3.4" rx="1.6"/><rect x="10.6" y="11.2" width="4.6" height="3.4" rx="1.6"/></g><g fill="none" stroke="#555" stroke-width="1.2"><rect x="6.6" y="11.2" width="4.4" height="3.4" rx="1.6"/><rect x="10.6" y="11.2" width="4.6" height="3.4" rx="1.6"/></g></svg></span><span class="tl" style="left:98px">Bills_Users</span></div></div><div class="abs sb" style="left:261px;top:0;width:16px;height:557px"><div class="thumb" style="left:0;top:43px;width:15px;height:393px"></div></div><div class="abs sb" style="left:0;top:557px;width:277px;height:17px"><div class="thumb" style="left:21px;top:1px;width:222px;height:14px"></div></div></div>
<div class="abs" style="left:0;top:84px;width:1px;height:576px;background:#d4d6d8"></div><div class="abs" style="left:278px;top:356px;width:2px;height:34px;background:repeating-linear-gradient(#8c8c8c 0 2px,transparent 2px 4px)"></div><div class="abs" style="left:281px;top:84px;width:1085px;height:576px;background:#fff"></div><div id="main" class="abs"></div><div id="tab" class="abs"><span class="t" style="left:5px;top:6.5px;font-family:'DejaVu Sans Condensed', 'DejaVu Sans', 'Liberation Sans', sans-serif;font-size:11.4px">All Items</span><svg class="abs" style="left:61px;top:7px" width="9" height="9" viewBox="0 0 9 9"><path d="M1 1l7 7M8 1l-7 7" stroke="#a0a0a0" stroke-width="1.6" fill="none"/></svg></div><div id="canvas" class="abs"><style>.grp{position:absolute;border:1px solid #ababab}.gl{position:absolute;white-space:pre;font:9.4px/11px 'Liberation Sans', sans-serif;color:#000}.rl{position:absolute;white-space:pre;font:8px/10px 'Liberation Sans', sans-serif;letter-spacing:-0.22px;color:#111;-webkit-text-stroke:0.1px #111}.tb{position:absolute;background:#fff;overflow:hidden}.tb .hd{position:absolute;left:0;top:0;right:0;height:12px;text-align:center;color:#fff;white-space:pre}.tb .hd b{position:relative;top:-1.5px}.tb .hm{font:bold 10px/12px 'DejaVu Sans Mono', 'Liberation Mono', monospace;letter-spacing:-0.1px}.tb .hs{font:bold 11px/12px 'Liberation Sans', sans-serif}.tb span{position:absolute;white-space:pre;font:8px/10px 'Liberation Sans', sans-serif;letter-spacing:-0.27px;color:#000;-webkit-text-stroke:0.15px #000}.tb span.ty{letter-spacing:-0.11px}.ib{position:absolute;left:925px;top:9px;width:133px;height:63px;background:#fff;border:1px solid #0000ff}.ib span{position:absolute;left:0;width:131px;height:12px;padding-left:1.5px;white-space:pre;font:8px/12px 'Liberation Sans', sans-serif;letter-spacing:-0.17px;border-bottom:1px solid #0000ff}</style><div class="abs" style="left:5px;top:0;width:1px;height:529px;background:#a8a8a8"></div><div class="abs" style="left:6px;top:488px;width:1064px;height:1px;background:#a8a8a8"></div><div class="grp" style="left:22px;top:9px;width:217px;height:259px;background:#d9ffb0"></div><span class="gl" style="left:35.3px;top:9.7px">Items categories</span><div class="grp" style="left:246px;top:9px;width:455px;height:259px;background:#f7fcd2"></div><span class="gl" style="left:256.0px;top:9.7px">Users roles</span><div class="grp" style="left:708px;top:9px;width:410px;height:462px;background:#d6ffff"></div><span class="gl" style="left:709.5px;top:9.7px">Finance</span><div class="grp" style="left:22px;top:282px;width:679px;height:189px;background:#f5eaea"></div><span class="gl" style="left:29.3px;top:282.7px">Sales</span><div class="abs" style="left:738px;top:0;width:1px;height:529px;background:rgba(90,100,100,.55)"></div><span class="rl" style="left:117.2px;top:107.0px">Items_Categories</span><span class="rl" style="left:399.5px;top:179.2px">Reference_3</span><span class="rl" style="left:442.5px;top:243.0px">Bills_Users</span><span class="rl" style="left:675.5px;top:125.4px">Reference_2</span><span class="rl" style="left:748.5px;top:240.0px">Reference_1</span><span class="rl" style="left:950.2px;top:400.4px">Reference_4</span><span class="rl" style="left:132.2px;top:287.2px">BillDetails_Items</span><span class="rl" style="left:449.0px;top:396.3px">Bills_Customers</span><svg class="abs" style="left:0;top:0" width="1064" height="529" viewBox="0 0 1064 529"><path d="M156.3 78.0 L142.6 126.0 L142.6 135.0" fill="none" stroke="rgba(0,0,0,.8)" stroke-width="1"/><path d="M142.6 126.5 L139.6 130.0 L136.6 135.0" fill="none" stroke="rgba(0,0,0,.8)" stroke-width="1"/><path d="M142.6 126.5 L141.0 130.0 L140.0 135.0" fill="none" stroke="rgba(0,0,0,.8)" stroke-width="1"/><circle cx="154.2" cy="85.0" r="3.3" fill="#d9ffb0" stroke="rgba(0,0,0,.8)" stroke-width="1"/><circle cx="142.7" cy="122.8" r="3.3" fill="#d9ffb0" stroke="rgba(0,0,0,.8)" stroke-width="1"/><path d="M132.5 227.0 L132.5 345.0" fill="none" stroke="rgba(0,0,0,.8)" stroke-width="1" shape-rendering="crispEdges"/><path d="M129.5 345.0 L129.5 340.0 L132.5 335.5" fill="none" stroke="rgba(0,0,0,.8)" stroke-width="1"/><path d="M135.5 345.0 L135.5 340.0 L132.5 335.5" fill="none" stroke="rgba(0,0,0,.8)" stroke-width="1"/><circle cx="132.5" cy="234.8" r="3.3" fill="#d9ffb0" stroke="rgba(0,0,0,.8)" stroke-width="1"/><circle cx="132.5" cy="332.0" r="3.3" fill="#f5eaea" stroke="rgba(0,0,0,.8)" stroke-width="1"/><path d="M399.5 152.0 L399.5 205.7" fill="none" stroke="rgba(0,0,0,.8)" stroke-width="1" shape-rendering="crispEdges"/><path d="M399.5 205.7 L821.6 332.0" fill="none" stroke="rgba(0,0,0,.8)" stroke-width="1"/><path d="M828.0 334.0 L853.5 335.5 L853.5 338.0" fill="none" stroke="rgba(0,0,0,.8)" stroke-width="1"/><path d="M828.0 335.0 L842.0 338.0" fill="none" stroke="rgba(0,0,0,.8)" stroke-width="1"/><circle cx="399.5" cy="160.0" r="3.3" fill="#f7fcd2" stroke="rgba(0,0,0,.8)" stroke-width="1"/><circle cx="825.0" cy="333.6" r="3.3" fill="#d6ffff" stroke="rgba(0,0,0,.8)" stroke-width="1"/><path d="M484.0 107.5 L442.5 107.5 L442.5 378.5 L401.0 378.5" fill="none" stroke="rgba(0,0,0,.8)" stroke-width="1" shape-rendering="crispEdges"/><circle cx="476.0" cy="107.5" r="3.3" fill="#f7fcd2" stroke="rgba(0,0,0,.8)" stroke-width="1"/><path d="M401.0 375.5 L406.0 375.5 L410.5 378.5" fill="none" stroke="rgba(0,0,0,.8)" stroke-width="1"/><path d="M401.0 381.5 L406.0 381.5 L410.5 378.5" fill="none" stroke="rgba(0,0,0,.8)" stroke-width="1"/><circle cx="414.3" cy="378.5" r="3.3" fill="#f5eaea" stroke="rgba(0,0,0,.8)" stroke-width="1"/><path d="M401.0 395.5 L498.0 395.5" fill="none" stroke="rgba(0,0,0,.8)" stroke-width="1" shape-rendering="crispEdges"/><path d="M401.0 392.5 L406.0 392.5 L410.5 395.5" fill="none" stroke="rgba(0,0,0,.8)" stroke-width="1"/><path d="M401.0 398.5 L406.0 398.5 L410.5 395.5" fill="none" stroke="rgba(0,0,0,.8)" stroke-width="1"/><circle cx="414.3" cy="395.5" r="3.3" fill="#f5eaea" stroke="rgba(0,0,0,.8)" stroke-width="1"/><circle cx="490.0" cy="394.7" r="3.3" fill="#f5eaea" stroke="rgba(0,0,0,.8)" stroke-width="1"/><path d="M608.0 144.5 L675.5 144.5 L675.5 104.5 L743.0 104.5" fill="none" stroke="rgba(0,0,0,.8)" stroke-width="1" shape-rendering="crispEdges"/><path d="M608.0 141.5 L613.0 141.5 L617.5 144.5" fill="none" stroke="rgba(0,0,0,.8)" stroke-width="1"/><path d="M608.0 147.5 L613.0 147.5 L617.5 144.5" fill="none" stroke="rgba(0,0,0,.8)" stroke-width="1"/><circle cx="621.2" cy="144.5" r="3.3" fill="#f7fcd2" stroke="rgba(0,0,0,.8)" stroke-width="1"/><circle cx="735.0" cy="104.0" r="3.3" fill="#d6ffff" stroke="rgba(0,0,0,.8)" stroke-width="1"/><path d="M875.0 107.5 L894.0 107.5 L894.0 108.5 L911.5 108.5 L911.5 219.0" fill="none" stroke="rgba(0,0,0,.8)" stroke-width="1" shape-rendering="crispEdges"/><path d="M908.5 219.0 L908.5 214.0 L911.5 209.5" fill="none" stroke="rgba(0,0,0,.8)" stroke-width="1"/><path d="M914.5 219.0 L914.5 214.0 L911.5 209.5" fill="none" stroke="rgba(0,0,0,.8)" stroke-width="1"/><circle cx="881.7" cy="106.6" r="3.3" fill="#d6ffff" stroke="rgba(0,0,0,.8)" stroke-width="1"/><circle cx="911.3" cy="206.0" r="3.3" fill="#d6ffff" stroke="rgba(0,0,0,.8)" stroke-width="1"/><path d="M770.5 153.0 L770.5 326.0" fill="none" stroke="rgba(0,0,0,.8)" stroke-width="1" shape-rendering="crispEdges"/><path d="M770.5 326.0 L665.0 339.6" fill="none" stroke="rgba(0,0,0,.8)" stroke-width="1"/><path d="M658.5 340.0 L655.0 337.6 L650.0 337.8" fill="none" stroke="rgba(0,0,0,.8)" stroke-width="1"/><path d="M658.5 340.2 L650.0 341.3" fill="none" stroke="rgba(0,0,0,.8)" stroke-width="1"/><path d="M658.5 340.5 L655.0 343.6 L650.0 344.6" fill="none" stroke="rgba(0,0,0,.8)" stroke-width="1"/><circle cx="770.5" cy="159.8" r="3.3" fill="#d6ffff" stroke="rgba(0,0,0,.8)" stroke-width="1"/><circle cx="661.8" cy="340.0" r="3.3" fill="#f5eaea" stroke="rgba(0,0,0,.8)" stroke-width="1"/><path d="M936.0 401.5 L953.0 401.5 L953.0 402.5 L965.5 402.5 L965.5 457.5 L859.0 457.5" fill="none" stroke="rgba(0,0,0,.8)" stroke-width="1" shape-rendering="crispEdges"/><path d="M862.5 440.0 L862.5 445.0 L859.5 449.5" fill="none" stroke="rgba(0,0,0,.8)" stroke-width="1"/><path d="M856.5 440.0 L856.5 445.0 L859.5 449.5" fill="none" stroke="rgba(0,0,0,.8)" stroke-width="1"/><path d="M859.5 440.0 L859.5 450.0" fill="none" stroke="rgba(0,0,0,.8)" stroke-width="1" shape-rendering="crispEdges"/><circle cx="943.9" cy="401.3" r="3.3" fill="#d6ffff" stroke="rgba(0,0,0,.8)" stroke-width="1"/><circle cx="859.3" cy="453.0" r="3.3" fill="#d6ffff" stroke="rgba(0,0,0,.8)" stroke-width="1"/></svg><div class="tb" style="left:57px;top:30px;width:144px;height:48px;border:2px solid #4678b7"><div class="hd hm" style="background:#4f81bd"><b>Categories</b></div><span style="left:1.5px;top:15.9px">Categorie_ID</span><span class="ty" style="left:63.3px;top:15.9px">INTEGER</span><span class="ty" style="left:123.0px;top:15.9px">(PK)</span><span style="left:1.5px;top:26.5px">Categorie_Name</span><span class="ty" style="left:63.3px;top:26.5px">VARCHAR(30)</span></div><div class="tb" style="left:50px;top:135px;width:165px;height:92px;border:2px solid #4678b7"><div class="hd hm" style="background:#4f81bd"><b>Items</b></div><span style="left:1.4px;top:15.6px">Item_ID</span><span class="ty" style="left:50.1px;top:15.6px">INTEGER</span><span style="left:1.4px;top:27.7px">Categorie_ID</span><span class="ty" style="left:50.1px;top:27.7px">INTEGER</span><span class="ty" style="left:147.4px;top:27.7px">(FK)</span><span style="left:1.4px;top:38.4px">Item_Name</span><span class="ty" style="left:50.1px;top:38.4px">VARCHAR(25)</span><span style="left:1.4px;top:49.4px">Item_Unit</span><span class="ty" style="left:50.1px;top:49.4px">VARCHAR(15)</span><span style="left:1.4px;top:60.4px">Item_Price</span><span class="ty" style="left:50.1px;top:60.4px">DOUBLE PRECISION(53)</span><span style="left:1.4px;top:71.4px">Item_Quantity</span><span class="ty" style="left:50.1px;top:71.4px">INTEGER</span></div><div class="tb" style="left:267px;top:93px;width:144px;height:59px;border:2px solid #009191"><div class="hd hs" style="background:#009999"><b>Roles</b></div><span style="left:1.4px;top:15.3px">Role_ID</span><span class="ty" style="left:63.2px;top:15.3px">VARCHAR(5)</span><span class="ty" style="left:123.6px;top:15.3px">(PK)</span><span style="left:1.4px;top:27.3px">Role_Name</span><span class="ty" style="left:63.2px;top:27.3px">VARCHAR(30)</span><span style="left:1.4px;top:38.3px">Role_Permission</span><span class="ty" style="left:63.2px;top:38.3px">INTEGER</span></div><div class="tb" style="left:484px;top:79px;width:124px;height:92px;border:2px solid #009191"><div class="hd hs" style="background:#009999"><b>Users</b></div><span style="left:1.4px;top:15.5px">User_ID</span><span class="ty" style="left:43.0px;top:15.5px">INTEGER</span><span class="ty" style="left:103.0px;top:15.5px">(PK)</span><span style="left:1.4px;top:27.8px">UserName</span><span class="ty" style="left:43.0px;top:27.8px">VARCHAR(50)</span><span style="left:1.4px;top:39.7px">PassWord</span><span class="ty" style="left:43.0px;top:39.7px">VARCHAR(40)</span><span style="left:1.4px;top:50.5px">Email</span><span class="ty" style="left:43.0px;top:50.5px">VARCHAR(50)</span><span style="left:1.4px;top:61.3px">Address</span><span class="ty" style="left:43.0px;top:61.3px">VARCHAR(50)</span><span style="left:1.4px;top:72.6px">Invoice_ID</span><span class="ty" style="left:43.0px;top:72.6px">INTEGER</span><span class="ty" style="left:103.0px;top:72.6px">(FK)</span></div><div class="tb" style="left:743px;top:51px;width:132px;height:102px;border:2px solid #519fe5"><div class="hd hm" style="background:#5aa7e8"><b>Invoice</b></div><span style="left:1.3px;top:15.8px">Invoice_ID</span><span class="ty" style="left:48.2px;top:15.8px">INTEGER</span><span class="ty" style="left:110.8px;top:15.8px">(PK)</span><span style="left:1.3px;top:27.3px">UserName</span><span class="ty" style="left:48.2px;top:27.3px">VARCHAR(50)</span><span style="left:1.3px;top:38.3px">Phone</span><span class="ty" style="left:48.2px;top:38.3px">VARCHAR(15)</span><span style="left:1.3px;top:49.3px">Email</span><span class="ty" style="left:48.2px;top:49.3px">VARCHAR(50)</span><span style="left:1.3px;top:60.3px">Address</span><span class="ty" style="left:48.2px;top:60.3px">VARCHAR(50)</span><span style="left:1.3px;top:71.5px">LastLogin</span><span class="ty" style="left:48.2px;top:71.5px">DECIMAL(15,4)</span><span style="left:1.3px;top:82.5px">User_Status</span><span class="ty" style="left:48.2px;top:82.5px">INTEGER</span></div><div class="tb" style="left:848px;top:219px;width:154px;height:80px;border:2px solid #519fe5"><div class="hd hm" style="background:#5aa7e8"><b>Invoice_order</b></div><span style="left:1.4px;top:15.5px">Item_ID</span><span class="ty" style="left:39.3px;top:15.5px">VARCHAR(5)</span><span class="ty" style="left:136.2px;top:15.5px">(PK)</span><span style="left:1.4px;top:27.7px">Bill_ID</span><span class="ty" style="left:39.3px;top:27.7px">INTEGER</span><span class="ty" style="left:136.2px;top:27.7px">(PK)</span><span style="left:1.4px;top:38.4px">Price</span><span class="ty" style="left:39.3px;top:38.4px">DOUBLE PRECISION(53)</span><span style="left:1.4px;top:49.7px">Quantity</span><span class="ty" style="left:39.3px;top:49.7px">INTEGER</span><span style="left:1.4px;top:60.4px">Invoice_ID</span><span class="ty" style="left:39.3px;top:60.4px">INTEGER</span><span class="ty" style="left:136.2px;top:60.4px">(FK)</span></div><div class="tb" style="left:771px;top:338px;width:165px;height:102px;border:2px solid #519fe5"><div class="hd hm" style="background:#5aa7e8"><b>Invoice_status</b></div><span style="left:1.3px;top:15.6px">Item_ID</span><span class="ty" style="left:50.2px;top:15.6px">INTEGER</span><span style="left:1.3px;top:27.5px">Categorie_ID</span><span class="ty" style="left:50.2px;top:27.5px">INTEGER</span><span style="left:1.3px;top:38.4px">Item_Name</span><span class="ty" style="left:50.2px;top:38.4px">VARCHAR(25)</span><span style="left:1.3px;top:49.6px">Item_Unit</span><span class="ty" style="left:50.2px;top:49.6px">VARCHAR(15)</span><span style="left:1.3px;top:60.4px">Item_Price</span><span class="ty" style="left:50.2px;top:60.4px">DOUBLE PRECISION(53)</span><span style="left:1.3px;top:71.4px">Item_Quantity</span><span class="ty" style="left:50.2px;top:71.4px">INTEGER</span><span style="left:1.3px;top:82.4px">Role_ID</span><span class="ty" style="left:50.2px;top:82.4px">VARCHAR(5)</span><span class="ty" style="left:147.5px;top:82.4px">(FK)</span></div><div class="tb" style="left:50px;top:345px;width:148px;height:70px;border:2px solid #ba4845"><div class="hd hm" style="background:#c0504d"><b>BillDetails</b></div><span style="left:1.5px;top:15.7px">Item_ID</span><span class="ty" style="left:31.4px;top:15.7px">VARCHAR(5)</span><span class="ty" style="left:127.4px;top:15.7px">(PK)</span><span style="left:1.5px;top:27.8px">Bill_ID</span><span class="ty" style="left:31.4px;top:27.8px">INTEGER</span><span class="ty" style="left:127.4px;top:27.8px">(PK)</span><span style="left:1.5px;top:38.6px">Price</span><span class="ty" style="left:31.4px;top:38.6px">DOUBLE PRECISION(53)</span><span style="left:1.5px;top:49.6px">Quantity</span><span class="ty" style="left:31.4px;top:49.6px">INTEGER</span></div><div class="tb" style="left:239px;top:331px;width:162px;height:113px;border:2px solid #ba4845"><div class="hd hm" style="background:#c0504d"><b>Bills</b></div><span style="left:1.0px;top:15.6px">Bill_ID</span><span class="ty" style="left:49.5px;top:15.6px">INTEGER</span><span class="ty" style="left:146.5px;top:15.6px">(PK)</span><span style="left:1.0px;top:27.5px">User_ID</span><span class="ty" style="left:49.5px;top:27.5px">INTEGER</span><span class="ty" style="left:146.5px;top:27.5px">(FK)</span><span style="left:1.0px;top:39.5px">Customer_ID</span><span class="ty" style="left:49.5px;top:39.5px">INTEGER</span><span class="ty" style="left:146.5px;top:39.5px">(FK)</span><span style="left:1.0px;top:50.4px">Date</span><span class="ty" style="left:49.5px;top:50.4px">DECIMAL(15,4)</span><span style="left:1.0px;top:61.4px">Discount</span><span class="ty" style="left:49.5px;top:61.4px">INTEGER</span><span style="left:1.0px;top:72.4px">Payment</span><span class="ty" style="left:49.5px;top:72.4px">VARCHAR(255)</span><span style="left:1.0px;top:83.4px">Total</span><span class="ty" style="left:49.5px;top:83.4px">DOUBLE PRECISION(53)</span><span style="left:1.0px;top:94.6px">Status</span><span class="ty" style="left:49.5px;top:94.6px">TIMESTAMP</span></div><div class="tb" style="left:498px;top:296px;width:152px;height:125px;border:2px solid #ba4845"><div class="hd hm" style="background:#c0504d"><b>Customers</b></div><span style="left:1.4px;top:15.6px">Customer_ID</span><span class="ty" style="left:70.3px;top:15.6px">BIGINT</span><span class="ty" style="left:133.2px;top:15.6px">(PK)</span><span style="left:1.4px;top:27.7px">Customer_Name</span><span class="ty" style="left:70.3px;top:27.7px">VARCHAR(60)</span><span style="left:1.4px;top:38.6px">CUSTOMER_AGE</span><span class="ty" style="left:70.3px;top:38.6px">INT</span><span style="left:1.4px;top:49.6px">Tel</span><span class="ty" style="left:70.3px;top:49.6px">VARCHAR(15)</span><span style="left:1.4px;top:60.5px">Address</span><span class="ty" style="left:70.3px;top:60.5px">VARCHAR(70)</span><span style="left:1.4px;top:71.4px">City</span><span class="ty" style="left:70.3px;top:71.4px">VARCHAR(30)</span><span style="left:1.4px;top:82.6px">Country</span><span class="ty" style="left:70.3px;top:82.6px">VARCHAR(40)</span><span style="left:1.4px;top:93.5px">Email</span><span class="ty" style="left:70.3px;top:93.5px">VARCHAR(100)</span><span style="left:1.4px;top:104.6px">Invoice_ID</span><span class="ty" style="left:70.3px;top:104.6px">INTEGER</span><span class="ty" style="left:133.2px;top:104.6px">(FK)</span></div><span class="rl" style="left:870.2px;top:108.3px">order_Invoice</span><div class="ib"><span style="top:0px">  * Physical Data Model *</span><span style="top:12px">Project : Sales DataModel</span><span style="top:24px">Diagram : All Items</span><span style="top:36px">Author : Soft-Builder</span><span style="top:48px;border-bottom:none">Version : 1.0</span></div></div><div class="abs sb" style="left:1347px;top:112px;width:16px;height:545px"><div class="thumb" style="left:0;top:18px;width:15px;height:21px"></div></div><div class="abs sb" style="left:283px;top:640px;width:1064px;height:17px"><div class="thumb" style="left:18px;top:0;width:116px;height:15px"></div></div><svg class="abs" style="left:268.5px;top:94.2px;overflow:visible" width="1" height="1"><path d="M-3.3 1.7L0 -1.6L3.3 1.7" stroke="#525252" stroke-width="1.9" fill="none"/></svg><svg class="abs" style="left:268.5px;top:634.0px;overflow:visible" width="1" height="1"><path d="M-3.3 -1.7L0 1.6L3.3 -1.7" stroke="#525252" stroke-width="1.9" fill="none"/></svg><svg class="abs" style="left:8.5px;top:650.0px;overflow:visible" width="1" height="1"><path d="M1.7 -3.3L-1.6 0L1.7 3.3" stroke="#525252" stroke-width="1.9" fill="none"/></svg><svg class="abs" style="left:252.0px;top:650.0px;overflow:visible" width="1" height="1"><path d="M-1.7 -3.3L1.6 0L-1.7 3.3" stroke="#525252" stroke-width="1.9" fill="none"/></svg><svg class="abs" style="left:1354.5px;top:121.2px;overflow:visible" width="1" height="1"><path d="M-3.3 1.7L0 -1.6L3.3 1.7" stroke="#525252" stroke-width="1.9" fill="none"/></svg><svg class="abs" style="left:1354.5px;top:630.6px;overflow:visible" width="1" height="1"><path d="M-3.3 -1.7L0 1.6L3.3 -1.7" stroke="#525252" stroke-width="1.9" fill="none"/></svg><svg class="abs" style="left:292.0px;top:647.5px;overflow:visible" width="1" height="1"><path d="M1.7 -3.3L-1.6 0L1.7 3.3" stroke="#525252" stroke-width="1.9" fill="none"/></svg><svg class="abs" style="left:1338.0px;top:647.4px;overflow:visible" width="1" height="1"><path d="M-1.7 -3.3L1.6 0L-1.7 3.3" stroke="#525252" stroke-width="1.9" fill="none"/></svg><div class="abs" style="left:0;top:684px;width:1366px;height:2px;background:#fff"></div><div class="abs" style="left:667px;top:663px;width:34px;height:2px;background:repeating-linear-gradient(90deg,#fff 0 2px,transparent 2px 4px)"></div><div class="abs" style="left:666px;top:662px;width:34px;height:2px;background:repeating-linear-gradient(90deg,#111 0 2px,transparent 2px 4px)"></div><div id="bar" class="abs"><svg class="abs" style="left:1356px;top:5px" width="8" height="6" viewBox="0 0 8 6"><path d="M0 5.2L3.6 0.3L7.2 5.2z" fill="#000"/></svg></div><div id="out" class="abs"></div><div id="tabs" class="abs"><div class="abs" style="left:5px;top:-1px;width:53px;height:25px;background:#f5f6f7;border:1px solid #dcdcdc;border-top:none"></div><span class="t" style="left:11px;top:4.7px;font-size:10.9px;color:#1a1a1a">General</span><span class="t" style="left:67px;top:4.7px;font-size:10.9px;color:#1a1a1a">Check Model</span><span class="t" style="left:147px;top:4.7px;font-size:10.9px;color:#1a1a1a">Generation</span><span class="t" style="left:219px;top:4.7px;font-size:10.9px;color:#1a1a1a">Reverse Engineer</span></div><div id="status" class="abs"><span class="t" style="left:1px;top:3px;font-family:'DejaVu Sans Condensed', 'DejaVu Sans', 'Liberation Sans', sans-serif;font-size:10.7px">DB : MS SQL Server 2017</span></div><div id="dark" class="abs"><div class="abs" style="left:631px;top:0;width:160px;height:2px;background:#4b4b4b"></div></div>
</body></html>
